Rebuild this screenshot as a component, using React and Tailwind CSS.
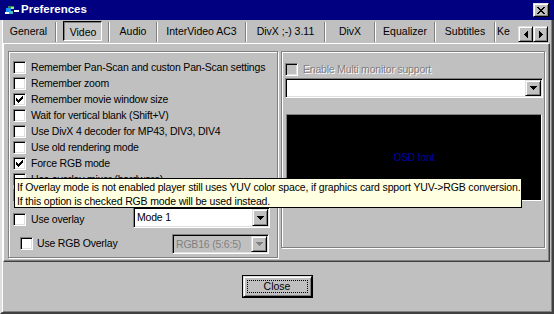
import React from "react";

const sunken =
  "border border-t-[#808080] border-l-[#808080] border-r-white border-b-white shadow-[inset_1px_1px_0_#000,inset_-1px_-1px_0_#dfdfdf]";
const raised =
  "border border-t-[#dfdfdf] border-l-[#dfdfdf] border-r-black border-b-black shadow-[inset_1px_1px_0_#fff,inset_-1px_-1px_0_#808080]";
const etched =
  "border border-[#808080] shadow-[inset_1px_1px_0_#fff,1px_1px_0_#fff]";

function CheckMark() {
  return (
    <svg width="7" height="7" viewBox="0 0 7 7" shapeRendering="crispEdges">
      <path
        fill="#000"
        d="M6 0h1v1h-1z M5 1h2v1h-2z M0 2h1v1h-1z M4 2h3v1h-3z M0 3h2v1h-2z M3 3h3v1h-3z M0 4h5v1h-5z M1 5h3v1h-3z M2 6h1v1h-1z"
      />
    </svg>
  );
}

function Check({ checked, disabled }) {
  return (
    <span
      className={`flex-none w-[13px] h-[13px] flex items-center justify-center ${
        disabled ? "bg-[#c0c0c0]" : "bg-white"
      } ${sunken}`}
    >
      {checked && <CheckMark />}
    </span>
  );
}

function DownArrow({ disabled }) {
  return (
    <svg width="7" height="4" viewBox="0 0 7 4" shapeRendering="crispEdges">
      <path
        fill={disabled ? "#808080" : "#000"}
        d="M0 0h7v1h-7z M1 1h5v1h-5z M2 2h3v1h-3z M3 3h1v1h-1z"
      />
    </svg>
  );
}

function Combo({ w, h, text, disabled }) {
  return (
    <div
      className={`flex items-stretch ${sunken} ${
        disabled ? "bg-[#c0c0c0]" : "bg-white"
      }`}
      style={{ width: w, height: h }}
    >
      <div className="flex-1 pl-[3px] flex items-center">
        <span className={disabled ? "text-[#808080]" : "text-black"}>{text}</span>
      </div>
      <div
        className={`w-[16px] m-[1px] ml-0 flex items-center justify-center bg-[#c0c0c0] ${raised}`}
      >
        <DownArrow disabled={disabled} />
      </div>
    </div>
  );
}

function Row({ checked, label }) {
  return (
    <div className="flex items-center h-[16px]">
      <Check checked={checked} />
      <span className="ml-[5px] whitespace-nowrap">{label}</span>
    </div>
  );
}

function Sep() {
  return (
    <div className="w-[2px] mt-[2px] mb-[1px] border-l border-l-[#808080] border-r border-r-white flex-none" />
  );
}

function Tab({ w, label, selected }) {
  return (
    <div
      className="flex-none flex items-center justify-center relative"
      style={{ width: w }}
    >
      {selected ? (
        <div className="w-[39px] h-[20px] -mt-[1px] flex items-center justify-center border border-t-black border-l-black border-r-white border-b-white shadow-[inset_1px_1px_0_#808080] bg-[#c8c8c8]">
          <span className="mt-[2px] ml-[1px]">{label}</span>
        </div>
      ) : (
        <span className="whitespace-nowrap">{label}</span>
      )}
    </div>
  );
}

function AppIcon() {
  return (
    <svg width="15" height="11" viewBox="0 0 15 11" shapeRendering="crispEdges">
      <path fill="#2e8b57" d="M3 1h6v3h-6z" />
      <path fill="#1e90ff" d="M1 3h5v4h-5z" />
      <path fill="#7fff7f" d="M6 2h3v2h-3z" />
      <path fill="#ffffff" d="M9 5h5v2h-5z M0 7h4v2h-4z" />
      <path fill="#40c0c0" d="M4 6h4v3h-4z" />
    </svg>
  );
}

export default function App() {
  return (
    <div className="w-[554px] h-[314px] bg-[#c0c0c0] font-['Liberation_Sans',Arial,sans-serif] text-[10.5px] tracking-[-0.2px] text-black relative overflow-hidden leading-none">
      {/* Title bar */}
      <div className="h-[20px] bg-[#000080] flex items-center tracking-normal">
        <div className="ml-[5px] flex items-center">
          <AppIcon />
        </div>
        <span className="ml-[1px] text-white font-bold text-[11.5px]">Preferences</span>
        <div
          className={`ml-auto mr-[5px] w-[16px] h-[14px] bg-[#c0c0c0] flex items-center justify-center ${raised}`}
        >
          <svg width="8" height="7" viewBox="0 0 8 7" shapeRendering="crispEdges">
            <path
              fill="#000"
              d="M0 0h2v1h-2z M6 0h2v1h-2z M1 1h2v1h-2z M5 1h2v1h-2z M2 2h4v1h-4z M3 3h2v1h-2z M2 4h4v1h-4z M1 5h2v1h-2z M5 5h2v1h-2z M0 6h2v1h-2z M6 6h2v1h-2z"
            />
          </svg>
        </div>
      </div>

      {/* Body */}
      <div className="h-[294px] border-l-2 border-l-[#dfdfdf] border-r-2 border-r-[#404040] border-b-2 border-b-[#404040] shadow-[inset_1px_0_0_#fff,inset_-1px_-1px_0_#808080]">
        {/* Tabs */}
        <div className="h-[23px] flex items-stretch relative overflow-hidden tracking-normal">
          <Tab w={53} label="General" />
          <Sep />
          <Tab w={51} label="Video" selected />
          <Sep />
          <Tab w={46} label="Audio" />
          <Sep />
          <Tab w={87} label="InterVideo AC3" />
          <Sep />
          <Tab w={77} label="DivX ;-) 3.11" />
          <Sep />
          <Tab w={48} label="DivX" />
          <Sep />
          <Tab w={58} label="Equalizer" />
          <Sep />
          <Tab w={58} label="Subtitles" />
          <Sep />
          <div className="w-[20px] flex items-center pl-[1px]">
            <span className="whitespace-nowrap">Ke</span>
          </div>
          <div className="absolute left-[516px] top-[6px] flex">
            <div className={`w-[15px] h-[16px] bg-[#c0c0c0] flex items-center justify-center ${raised}`}>
              <svg width="4" height="7" viewBox="0 0 4 7" shapeRendering="crispEdges">
                <path fill="#000" d="M3 0h1v7h-1z M2 1h1v5h-1z M1 2h1v3h-1z M0 3h1v1h-1z" />
              </svg>
            </div>
            <div className={`w-[15px] h-[16px] bg-[#c0c0c0] flex items-center justify-center ${raised}`}>
              <svg width="4" height="7" viewBox="0 0 4 7" shapeRendering="crispEdges">
                <path fill="#000" d="M0 0h1v7h-1z M1 1h1v5h-1z M2 2h1v3h-1z M3 3h1v1h-1z" />
              </svg>
            </div>
          </div>
        </div>

        {/* Tab page */}
        <div className="ml-[1px] w-[547px] h-[219px] border border-t-white border-l-white border-r-[#404040] border-b-[#404040] shadow-[inset_-1px_-1px_0_#808080] flex items-start gap-[3px] pl-[4px] pt-[7px]">
          {/* Left group */}
          <div className={`w-[270px] h-[207px] ${etched} pl-[4px] pt-[7px]`}>
            <Row label="Remember Pan-Scan and custon Pan-Scan settings" />
            <Row label="Remember zoom" />
            <Row checked label="Remember movie window size" />
            <Row label="Wait for vertical blank (Shift+V)" />
            <Row label="Use DivX 4 decoder for MP43, DIV3, DIV4" />
            <Row label="Use old rendering mode" />
            <Row checked label="Force RGB mode" />
            <Row label="Use overlay mixer (hardware)" />
            <Row label="Use YUV 4:2:2 mode" />
            <div className="flex items-start h-[21px] mt-[4px]">
              <div className="w-[120px] flex items-center mt-[6px] h-[13px]">
                <Check />
                <span className="ml-[5px]">Use overlay</span>
              </div>
              <Combo w={137} h={21} text="Mode 1" />
            </div>
            <div className="flex items-start h-[20px] mt-[6px] pl-[7px]">
              <div className="w-[152px] flex items-center mt-[3px] h-[13px]">
                <Check />
                <span className="ml-[4px]">Use RGB Overlay</span>
              </div>
              <Combo w={97} h={20} text="RGB16 (5:6:5)" disabled />
            </div>
          </div>

          {/* Right group */}
          <div className={`w-[264px] h-[197px] ${etched} pl-[3px] pt-[11px]`}>
            <div className="flex items-center h-[13px]">
              <Check disabled />
              <span className="ml-[5px] text-[#808080] [text-shadow:1px_1px_0_#fff]">
                Enable Multi monitor support
              </span>
            </div>
            <div className="mt-[2px]">
              <Combo w={258} h={20} text="" />
            </div>
            <div className="mt-[16px] ml-[1px] w-[256px] h-[87px] bg-black border border-t-[#808080] border-l-[#808080] border-r-white border-b-white flex items-center justify-center">
              <span className="text-[#0000a8] text-[10px] tracking-normal">OSD font</span>
            </div>
          </div>
        </div>

        {/* Close button */}
        <div className="flex justify-center mt-[13px] tracking-normal">
          <div className="w-[71px] h-[23px] border border-black">
            <div className={`w-full h-full ${raised} p-[3px]`}>
              <div className="w-full h-full border border-dotted border-black flex items-center justify-center">
                <span className="text-[10.5px]">Close</span>
              </div>
            </div>
          </div>
        </div>
      </div>

      {/* Tooltip */}
      <div className="absolute left-[14px] top-[178px] w-[508px] h-[30px] bg-[#ffffe1] border border-black pl-[2px] pt-[1px] leading-[14px] text-[10.5px] tracking-[-0.15px] whitespace-nowrap">
        <div>If Overlay mode is not enabled player still uses YUV color space, if graphics card spport YUV-&gt;RGB conversion.</div>
        <div>If this option is checked RGB mode will be used instead.</div>
      </div>
    </div>
  );
}
